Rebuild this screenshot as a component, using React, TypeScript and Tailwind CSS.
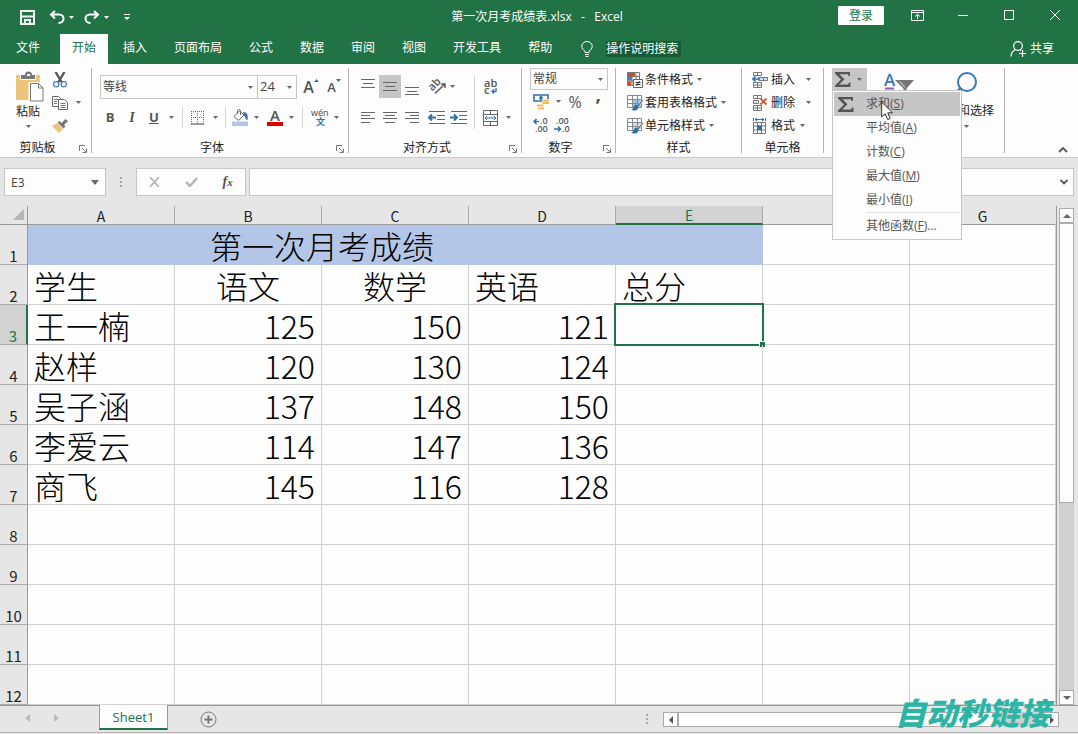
import { ReactNode } from 'react';
import clsx from 'clsx';

const UI_FONT = "font-['Open_Sans','Noto_Sans_CJK_SC',sans-serif]";
const CELL_FONT = "font-['Noto_Sans_CJK_SC',sans-serif]";

const tabs = ['开始', '插入', '页面布局', '公式', '数据', '审阅', '视图', '开发工具', '帮助'];
const columns = ['A', 'B', 'C', 'D', 'E', 'F', 'G'];
const students = [
  { name: '王一楠', scores: [125, 150, 121] },
  { name: '赵样', scores: [120, 130, 124] },
  { name: '吴子涵', scores: [137, 148, 150] },
  { name: '李爱云', scores: [114, 147, 136] },
  { name: '商飞', scores: [145, 116, 128] },
];
const emptyRows = [8, 9, 10, 11, 12];
const sumMenu = [
  { text: '求和', hotkey: 'S' },
  { text: '平均值', hotkey: 'A' },
  { text: '计数', hotkey: 'C' },
  { text: '最大值', hotkey: 'M' },
  { text: '最小值', hotkey: 'I' },
];

const Arrow = ({ className }: { className?: string }) => (
  <svg width="5" height="3" viewBox="0 0 5 3" className={clsx('shrink-0', className)} fill="currentColor">
    <path d="M0 0h5L2.500 3z" />
  </svg>
);

const Launcher = () => (
  <svg width="8" height="8" viewBox="0 0 8 8" fill="none" stroke="#777">
    <path d="M.5 6V.5H6M3 3l4 4M7.500 3.500v4h-4" />
  </svg>
);

interface IconButtonProps {
  label: string;
  className?: string;
  children: ReactNode;
}

const IconButton = ({ label, className, children }: IconButtonProps) => (
  <button
    aria-label={label}
    className={clsx('flex h-[23px] shrink-0 items-center justify-center text-[#555]', className ?? 'w-[22px]')}
  >
    {children}
  </button>
);

interface GroupProps {
  title?: string;
  className: string;
  launcher?: boolean;
  children: ReactNode;
}

const Group = ({ title, className, launcher, children }: GroupProps) => (
  <section className={clsx('relative flex shrink-0 flex-col border-r border-[#b5b5b5]', className)}>
    <div className="flex-1">{children}</div>
    <div className="relative flex h-[10px] items-center justify-center">
      {title && <span className={clsx('leading-4', launcher && 'pr-4')}>{title}</span>}
      {launcher && (
        <button aria-label={`${title}设置`} className="absolute right-1 bottom-0">
          <Launcher />
        </button>
      )}
    </div>
  </section>
);

const Lines = ({ rows }: { rows: number[][] }) => (
  <svg width="16" height="16" viewBox="0 0 16 16" stroke="#666">
    {rows.map(([x1, x2, y], i) => (
      <path key={i} d={`M${x1} ${y + 0.5}H${x2}`} />
    ))}
  </svg>
);

const IndentIcon = ({ right }: { right?: boolean }) => (
  <svg width="18" height="14" viewBox="0 0 18 14" fill="none" stroke="#666">
    <path d="M1 .5h16M9 4.500h8M9 8.500h8M1 12.500h16" />
    {right ? (
      <path d="M0 6.500h7M4 3.500l3 3-3 3" stroke="#2f6fae" strokeWidth="2" />
    ) : (
      <path d="M8 6.500H1M4 3.500l-3 3 3 3" stroke="#2f6fae" strokeWidth="2" />
    )}
  </svg>
);

const Sigma = () => (
  <svg width="16" height="15" viewBox="0 0 16 15" fill="#555">
    <path d="M0 0h15v4h-1.400L13 2.300H4.500l5 5L4.200 12.500h8.800l1-2H15.500V15H0v-1.500l6-6L0 1.500z" />
  </svg>
);

const ConditionalIcon = () => (
  <svg width="16" height="16" viewBox="0 0 16 16" fill="none">
    <path d="M.5.5h12v13H.5zM.5 4.500h12M.5 9h12M5 .5v13M9 .5v10" stroke="#777" />
    <path d="M1 1h7v3H1z" fill="#d0492f" />
    <path d="M1 5h4v3.500H1z" fill="#4a7ebb" />
    <path d="M1 9.500h3V13H1z" fill="#d0492f" />
    <path d="M6.500 7.500h9v8h-9z" fill="#fff" stroke="#666" />
    <path d="M8.500 10.500h5M8.500 12.500h5M12.500 9l-3 5" stroke="#333" />
  </svg>
);

const TableStyleIcon = ({ shaded }: { shaded?: boolean }) => (
  <svg width="17" height="16" viewBox="0 0 17 16" fill="none">
    {shaded ? <path d="M5 4.500h9V11H5z" fill="#cfdcec" /> : <path d="M5 4.500h10V12H5z" fill="#9cc3e6" />}
    <path d="M.5.5h14v12H.5zM.5 4.500h14M.5 8.500h14M5.500.5v12M10.500.5v12" stroke="#888" />
    <path d="M16 4l-6 6.500 1.500 1.500 5-6.500z" fill="#666" stroke="#fff" strokeWidth=".6" />
    <path d="M9.500 9.500c-3.500 0-2 4.500-5.500 5 2.500 2 7.500 1.500 7.500-3z" fill="#2f6fae" />
  </svg>
);

const CellsIcon = ({ kind }: { kind: string }) => (
  <svg width="16" height="16" viewBox="0 0 16 16" fill="none" stroke="#777">
    {kind === '格式' ? (
      <>
        <path d="M1.500 4.500h12v11h-12zM1.500 8h12M1.500 12h12M5.500 4.500v11M9.500 4.500v11" />
        <path d="M5 7.500h5V12H5z" fill="#2f6fae" stroke="none" />
        <path d="M1.500 0v3M13.500 0v3M3 1.500h9M5 0L3 1.500 5 3M10 0l2 1.500L10 3" stroke="#2f6fae" />
      </>
    ) : (
      <>
        <path d="M1.500.5h8v3h-8zM5.500.5v3M1.500 10.500h8v5h-8zM5.500 10.500v5M1.500 13h8" />
        {kind === '插入' ? (
          <>
            <path d="M6.500 5.500h9v3h-9zM11.500 5.500v3" fill="#d5e3f2" />
            <path d="M8 7H1M3.500 4.500L1 7l2.500 2.500" stroke="#2f6fae" strokeWidth="1.600" />
          </>
        ) : (
          <>
            <path d="M1.500 5.500h5v3h-5z" fill="#d5e3f2" />
            <path d="M8.500 3.500l6 6M14.500 3.500l-6 6" stroke="#d8532f" strokeWidth="1.800" />
          </>
        )}
      </>
    )}
  </svg>
);

const TitleBar = () => (
  <header className="relative flex h-[34px] items-center justify-between bg-[#217346] text-white">
    <div className="flex items-center pl-5">
      <button aria-label="保存" className="mr-[14px]">
        <svg width="15" height="15" viewBox="0 0 15 15" fill="none" stroke="#f0f5f2" strokeWidth="2">
          <path d="M1 1h13v13H1zM1 6.500h13M5 14v-4h5v4" />
        </svg>
      </button>
      <button aria-label="撤消" className="flex items-center gap-1">
        <svg width="16" height="14" viewBox="0 0 16 14" fill="none" stroke="#fff" strokeWidth="2">
          <path d="M6 1L2 4.500l4 4M2 4.500h8c3 0 4.500 2 4.500 4S13 13 9.500 13" />
        </svg>
        <Arrow />
      </button>
      <button aria-label="恢复" className="ml-[10px] flex items-center gap-1">
        <svg width="16" height="14" viewBox="0 0 16 14" fill="none" stroke="#fff" strokeWidth="2">
          <path d="M10 1l4 3.500-4 4M14 4.500H6C3 4.500 1.500 6.500 1.500 8.500S3 13 6.500 13" />
        </svg>
        <Arrow />
      </button>
      <button aria-label="自定义快速访问工具栏" className="ml-[15px]">
        <svg width="6" height="6" viewBox="0 0 6 6" fill="#fff">
          <path d="M0 0h6v1H0zM0 3h6L3 6z" />
        </svg>
      </button>
    </div>
    <h1 className="absolute left-1/2 -translate-x-1/2 pr-1 text-xs whitespace-pre">第一次月考成绩表.xlsx   -   Excel</h1>
    <div className="flex h-full items-center">
      <button className="mr-[10px] mb-[3px] h-[19px] w-[46px] rounded-[1px] bg-white leading-[18px] text-[#217346]">登录</button>
      <button aria-label="功能区显示选项" className="flex w-[46px] justify-center pb-1">
        <svg width="13" height="11" viewBox="0 0 13 11" fill="none" stroke="#fff">
          <path d="M.5.5h12v10H.5zM.5 2.500h12M6.500 9V4.500M4 6.500l2.500-2.300L9 6.500" />
        </svg>
      </button>
      <button aria-label="最小化" className="flex w-[46px] justify-center pb-1">
        <svg width="10" height="11" stroke="#fff">
          <path d="M0 5.500h10" />
        </svg>
      </button>
      <button aria-label="最大化" className="flex w-[46px] justify-center pb-1">
        <svg width="10" height="10" fill="none" stroke="#fff">
          <path d="M.5.5h9v9h-9z" />
        </svg>
      </button>
      <button aria-label="关闭" className="flex w-[46px] justify-center pb-1">
        <svg width="10" height="10" stroke="#fff">
          <path d="M0 0l10 10M10 0L0 10" />
        </svg>
      </button>
    </div>
  </header>
);

const TabBar = () => (
  <nav className="flex h-[30px] items-center gap-[3px] bg-[#217346] text-white">
    <button className="mr-px h-full w-14 pb-0.5">文件</button>
    {tabs.map((tab) => (
      <button key={tab} className={clsx('h-full shrink-0 px-3 pb-0.5', tab === '开始' && 'bg-[#fdfdfd] text-[#217346]')}>
        {tab}
      </button>
    ))}
    <button className="ml-[14px] flex shrink-0 items-center gap-[13px]">
      <svg width="12" height="16" viewBox="0 0 12 16" fill="none" stroke="#fff">
        <path d="M4 11.500v-1.300C2 8.800.8 7.300.8 5.300a5.200 4.800 0 0110.400 0c0 2-1.200 3.500-3.200 4.900v1.300zM4 13.500h4M4.500 15.500h3" />
      </svg>
      <span className="bg-[#185c37] pr-[3px] leading-4">操作说明搜索</span>
    </button>
    <button className="ml-auto flex shrink-0 items-center gap-1 pr-6 pb-px">
      <svg width="16" height="16" viewBox="0 0 16 16" fill="none" stroke="#fff" strokeWidth="1.200">
        <path d="M8 .7a4.300 4.300 0 010 8.700A4.300 4.300 0 018 .7M1 15.500c0-3 1.500-5.300 4-6.500M10 9.300h1M12.500 9v7M9 12.500h7" />
      </svg>
      共享
    </button>
  </nav>
);

const ClipboardGroup = () => (
  <Group title="剪贴板" className="w-[92px]" launcher>
    <div className="flex pl-3">
      <button className="flex w-8 flex-col items-center pt-[3px]">
        <svg width="28" height="31" viewBox="0 0 28 31" className="mb-0.5 ml-1" fill="none">
          <path d="M0 4h24v25H0z" fill="#ecc57a" />
          <path d="M4 9V3.500h16V9z" fill="#fff" />
          <path d="M5 8V4h4a3.500 3.500 0 017 0h3v4z" fill="#777" />
          <path d="M11 3h3v2h-3z" fill="#fff" />
          <path d="M14 12.500h8.500l4.500 4.500v13H14z" fill="#fff" stroke="#fff" strokeWidth="3" />
          <path d="M14.500 12.500h8l4.500 4.500v13H14.500zM22.500 12.500V17H27" fill="#fff" stroke="#777" />
        </svg>
        <span className="leading-4">粘贴</span>
        <Arrow className="mt-[5px]" />
      </button>
      <div className="flex flex-col pl-2">
        <IconButton label="剪切" className="w-4">
          <svg width="14" height="16" viewBox="0 0 14 16" fill="none">
            <path d="M2.500 0l6.500 10.500M11.500 0L5 10.500" stroke="#555" strokeWidth="2.300" />
            <circle cx="3.200" cy="12.300" r="2.600" fill="#fff" stroke="#4a7ebb" strokeWidth="1.300" />
            <circle cx="10.800" cy="12.300" r="2.600" fill="#fff" stroke="#4a7ebb" strokeWidth="1.300" />
          </svg>
        </IconButton>
        <IconButton label="复制" className="gap-2">
          <svg width="16" height="14" viewBox="0 0 16 14" stroke="#666" fill="#fff">
            <path d="M.5.5h6l2 2v8h-8z" />
            <path d="M2 3.500h4M2 5.500h3M2 7.500h3" stroke="#4a7ebb" />
            <path d="M6.500 3.500h6l3 3v7h-9z" />
            <path d="M8.500 7.500h5M8.500 9.500h5M8.500 11.500h5" stroke="#4a7ebb" />
          </svg>
          <Arrow />
        </IconButton>
        <IconButton label="格式刷" className="w-4">
          <svg width="16" height="14" viewBox="0 0 16 14">
            <path d="M0 7l5-3 6 6-4 4z" fill="#ecc57a" />
            <path d="M5.500 3.500l2-1.500 2 2L13.500 0 16 2l-4 4 1.500 1.500L11.500 9.500z" fill="#777" />
          </svg>
        </IconButton>
      </div>
    </div>
  </Group>
);

const Separator = ({ className }: { className?: string }) => <span className={clsx('w-px bg-[#d5d5d5]', className)} />;

const FontGroup = () => (
  <Group title="字体" className="w-[257px]" launcher>
    <div className="flex pt-[7px] pl-2">
      <label className="relative flex h-6 w-[158px] items-center border border-[#c6c6c6]">
        <select aria-label="字体" className="size-full appearance-none pl-0.5 text-[#444] outline-none">
          <option>等线</option>
        </select>
        <Arrow className="absolute right-1" />
      </label>
      <label className="relative -ml-px flex h-6 w-10 items-center border border-[#c6c6c6]">
        <select aria-label="字号" className="size-full appearance-none pl-0.5 text-[13px] text-[#444] outline-none">
          <option>24</option>
        </select>
        <Arrow className="absolute right-1" />
      </label>
      <IconButton label="增大字号" className="ml-[6px] w-4">
        <span className="text-base font-semibold">A</span>
        <svg width="5" height="3" className="mb-3 shrink-0" fill="#2f6fae"><path d="M0 3h5L2.500 0z" /></svg>
      </IconButton>
      <IconButton label="减小字号" className="ml-[7px] w-4">
        <span className="pt-0.5 text-[13px] font-semibold">A</span>
        <svg width="5" height="3" className="mb-3 shrink-0" fill="#2f6fae"><path d="M0 0h5L2.500 3z" /></svg>
      </IconButton>
    </div>
    <div className="flex items-center pt-[7px] pl-[7px]">
      <IconButton label="加粗"><b className="text-[13px]">B</b></IconButton>
      <IconButton label="倾斜"><i className="font-['Liberation_Serif',serif] text-sm font-bold">I</i></IconButton>
      <IconButton label="下划线"><span className="text-[13px] font-bold underline">U</span></IconButton>
      <IconButton label="下划线选项" className="w-3"><Arrow /></IconButton>
      <Separator className="mx-[5px] h-[21px]" />
      <IconButton label="边框" className="ml-[3px] gap-2">
        <svg width="14" height="14" viewBox="0 0 14 14" fill="none" stroke="#666">
          <path d="M.5 0v13M6.500 0v13M12.500 0v13M0 .5h13M0 6.500h13" strokeDasharray="1 1" />
          <path d="M0 13h13" stroke="#444" />
        </svg>
        <Arrow />
      </IconButton>
      <Separator className="mr-1.5 ml-[7px] h-[21px]" />
      <IconButton label="填充颜色" className="gap-[5px]">
        <svg width="17" height="17" viewBox="0 0 17 17" fill="none">
          <path d="M0 12.500h16V17H0z" fill="#b4c6e7" />
          <path d="M7.500 2L2 7.500l4.500 4L12 6zM5.500 5V2c0-2 3-2 3 0v4" stroke="#666" />
          <path d="M11 3c4 0 5.500 3 4.500 8-2 0-2-3-3.500-4.500z" fill="#2f6fae" />
        </svg>
        <Arrow />
      </IconButton>
      <IconButton label="字体颜色" className="ml-2 gap-1.5">
        <span className="flex w-4 flex-col items-center">
          <span className="text-[15px] leading-[13px] font-semibold">A</span>
          <span className="h-1 w-full bg-[#e00000]" />
        </span>
        <Arrow />
      </IconButton>
      <Separator className="mr-[9px] ml-2 h-[21px]" />
      <IconButton label="拼音" className="gap-1.5">
        <svg width="16" height="18" viewBox="0 0 16 18" className="overflow-visible">
          <text x="-1" y="7" fontSize="9" fill="#444">wén</text>
          <text x="4" y="16" fontSize="9" fontWeight="700" fill="#2f6fae">文</text>
        </svg>
        <Arrow />
      </IconButton>
    </div>
  </Group>
);

const AlignGroup = () => (
  <Group title="对齐方式" className="w-[173px]" launcher>
    <div className="flex pt-[7px] pl-2">
      <div className="flex flex-col gap-2">
        <div className="flex">
          <IconButton label="顶端对齐"><Lines rows={[[1, 15, 0], [3, 13, 4], [1, 15, 8]]} /></IconButton>
          <IconButton label="垂直居中" className="w-[22px] bg-[#c6c6c6]"><Lines rows={[[1, 15, 3], [3, 13, 7], [1, 15, 11]]} /></IconButton>
          <IconButton label="底端对齐"><Lines rows={[[1, 15, 8], [3, 13, 12], [1, 15, 15]]} /></IconButton>
          <IconButton label="方向" className="ml-1.5 gap-1">
            <svg width="17" height="17" viewBox="0 0 17 17" className="overflow-visible" fill="none" stroke="#555">
              <text x="1" y="12" fontSize="11" fontWeight="600" fill="#555" stroke="none" transform="rotate(-45 4 10)">ab</text>
              <path d="M6 15.500L15.500 6.500M12 6h4v4" strokeWidth="1.400" />
            </svg>
            <Arrow />
          </IconButton>
        </div>
        <div className="flex">
          <IconButton label="左对齐"><Lines rows={[[1, 15, 2], [1, 10, 5], [1, 15, 8], [1, 10, 12]]} /></IconButton>
          <IconButton label="居中"><Lines rows={[[1, 15, 2], [3, 13, 5], [1, 15, 8], [3, 13, 12]]} /></IconButton>
          <IconButton label="右对齐"><Lines rows={[[1, 15, 2], [6, 15, 5], [1, 15, 8], [6, 15, 12]]} /></IconButton>
          <IconButton label="减少缩进量" className="ml-[3px] w-[22px]"><IndentIcon /></IconButton>
          <IconButton label="增加缩进量"><IndentIcon right /></IconButton>
        </div>
      </div>
      <Separator className="mr-2 ml-1" />
      <div className="flex flex-col gap-2">
        <IconButton label="自动换行" className="w-4">
          <svg width="14" height="18" viewBox="0 0 14 18" className="overflow-visible" fill="none">
            <text x="0" y="9" fontSize="11" fontWeight="600" fill="#555">ab</text>
            <text x="0" y="16" fontSize="11" fontWeight="600" fill="#555">c</text>
            <path d="M12 10v3.500H8M10 11.500l-2 2 2 2" stroke="#2f6fae" strokeWidth="1.300" />
          </svg>
        </IconButton>
        <IconButton label="合并后居中" className="gap-2">
          <svg width="15" height="16" viewBox="0 0 15 16" fill="none" stroke="#666">
            <path d="M.5.5h14v15H.5zM.5 4.500h14M.5 11.500h14M7.500.5v4M7.500 11.500v4" />
            <path d="M2 8h11M4 6L2 8l2 2M11 6l2 2-2 2" stroke="#2f6fae" />
          </svg>
          <Arrow />
        </IconButton>
      </div>
    </div>
  </Group>
);

const NumberGroup = () => (
  <Group title="数字" className="w-[94px]" launcher>
    <div className="flex flex-col pl-2">
      <label className="relative flex h-[22px] w-[78px] items-center border border-[#c6c6c6]">
        <select aria-label="数字格式" className="size-full appearance-none pl-0.5 text-[#444] outline-none">
          <option>常规</option>
        </select>
        <Arrow className="absolute right-1" />
      </label>
      <div className="flex items-center pl-[3px]">
        <IconButton label="会计数字格式" className="gap-1.5">
          <svg width="17" height="16" viewBox="0 0 17 16" fill="none">
            <path d="M1 1h14v6H1z" stroke="#2f6fae" strokeWidth="1.600" />
            <circle cx="8" cy="4" r="1.900" fill="#2f6fae" />
            <path d="M9 5h8v6H9zM4 9h7v7H4z" fill="#fff" />
            <path d="M9.500 6.500H16M9.500 9H16M4 11.500h6.500M5 14.500h6" stroke="#ecb75c" strokeWidth="1.800" />
          </svg>
          <Arrow />
        </IconButton>
        <IconButton label="百分比样式" className="ml-1.5 w-4"><span className="text-base font-medium">%</span></IconButton>
        <IconButton label="千位分隔样式" className="ml-[7px] w-4"><span className="pt-2 text-xl leading-5 font-bold">’</span></IconButton>
      </div>
      <div className="flex gap-[5px] pl-[3px]">
        <IconButton label="增加小数位数" className="w-4">
          <svg width="16" height="16" viewBox="0 0 16 16" className="overflow-visible" fill="none">
            <text x="7" y="7" fontSize="9" fontWeight="600" fill="#555">.0</text>
            <text x="2" y="15" fontSize="9" fontWeight="600" fill="#555">.00</text>
            <path d="M6 4.500H1M3.500 2L1 4.500 3.500 7" stroke="#2f6fae" strokeWidth="1.500" />
          </svg>
        </IconButton>
        <IconButton label="减少小数位数" className="w-4">
          <svg width="16" height="16" viewBox="0 0 16 16" className="overflow-visible" fill="none">
            <text x="2" y="7" fontSize="9" fontWeight="600" fill="#555">.00</text>
            <text x="8" y="15" fontSize="9" fontWeight="600" fill="#555">.0</text>
            <path d="M0 12h6M4 9.500L6.500 12 4 14.500" stroke="#2f6fae" strokeWidth="1.500" />
          </svg>
        </IconButton>
      </div>
    </div>
  </Group>
);

const StyleGroup = () => (
  <Group title="样式" className="w-[126px]">
    <div className="flex flex-col items-start pl-[11px]">
      {['条件格式', '套用表格格式', '单元格样式'].map((text, i) => (
        <button key={text} className="flex h-[23px] items-center">
          <span className="w-[18px]">{i === 0 ? <ConditionalIcon /> : <TableStyleIcon shaded={i === 2} />}</span>
          {text}
          <Arrow className="ml-1" />
        </button>
      ))}
    </div>
  </Group>
);

const CellsGroup = () => (
  <Group title="单元格" className="w-[82px]">
    <div className="flex flex-col items-start pl-[10px]">
      {['插入', '删除', '格式'].map((text) => (
        <button key={text} className="flex h-[23px] items-center">
          <CellsIcon kind={text} />
          <span className="ml-[3px]">{text}</span>
          <Arrow className={text === '格式' ? 'ml-[5px]' : 'ml-[11px]'} />
        </button>
      ))}
    </div>
  </Group>
);

const SumMenu = () => (
  <div role="menu" className="absolute top-[22px] left-2 z-20 w-[130px] border border-[#c6c6c6] bg-[#fdfdfd] p-px text-[#555]">
    {sumMenu.map((item, i) => (
      <button
        key={item.text}
        role="menuitem"
        className={clsx('relative flex h-6 w-full items-center pl-8', i === 0 && 'bg-[#c6c6c6]')}
      >
        {i === 0 && (
          <span className="absolute left-1">
            <Sigma />
          </span>
        )}
        <span>
          {item.text}(<u>{item.hotkey}</u>)
        </span>
        {i === 0 && (
          <svg width="13" height="20" viewBox="0 0 13 20" className="absolute top-[9px] left-[47px]" fill="#fff" stroke="#333">
            <path d="M.7 1v15l3.500-3.300L6.700 18.500l2.500-1-2.500-5.700h4.800z" />
          </svg>
        )}
      </button>
    ))}
    <div className="ml-8 border-t border-[#e1e1e1]" />
    <button role="menuitem" className="flex h-[25px] w-full items-center pl-8">
      <span>
        其他函数(<u>F</u>)...
      </span>
    </button>
  </div>
);

const EditGroup = () => (
  <Group className="w-[181px]">
    <div className="flex items-start pl-2">
      <button aria-label="自动求和" className="flex h-[22px] w-[35px] items-center gap-[6px] bg-[#c6c6c6] pl-[3px]">
        <Sigma />
        <Arrow />
      </button>
      <button aria-label="排序和筛选" className="ml-4 pt-1">
        <svg width="31" height="20" viewBox="0 0 31 20" className="overflow-visible">
          <text x="1" y="14" fontSize="17" fontWeight="600" fill="#3b77b5">A</text>
          <path d="M2 16.500h9" stroke="#8d5fb0" strokeWidth="2" />
          <path d="M12 8h19l-7.500 8.500v3h-3v-3z" fill="#777" />
          <path d="M17 9.500l5 6" stroke="#ddd" />
        </svg>
      </button>
      <button className="ml-5 flex w-[60px] flex-col items-center pt-1">
        <svg width="22" height="22" viewBox="0 0 22 22" className="mb-[9px] ml-1" fill="none" stroke="#3b77b5">
          <circle cx="12" cy="10" r="9" strokeWidth="2" />
          <path d="M6 16l-5 5" strokeWidth="3" />
        </svg>
        <span className="leading-4">查找和选择</span>
        <Arrow className="mt-[6px] ml-1" />
      </button>
    </div>
    <SumMenu />
  </Group>
);

const Ribbon = () => (
  <div className="flex h-[93px] bg-[#fdfdfd] py-1 text-[#222] [&_svg]:text-[#666]">
    <ClipboardGroup />
    <FontGroup />
    <AlignGroup />
    <NumberGroup />
    <StyleGroup />
    <CellsGroup />
    <EditGroup />
    <button aria-label="折叠功能区" className="mt-auto mr-[10px] ml-auto">
      <svg width="10" height="7" fill="none" stroke="#555" strokeWidth="1.800">
        <path d="M1 6l4-4 4 4" />
      </svg>
    </button>
  </div>
);

const FormulaBar = () => (
  <div className="flex h-[49px] items-start border-t border-[#c9c9c9] bg-[#e6e6e6] pt-[10px] pr-1 pl-1">
    <label className="relative flex h-7 w-[102px] items-center border border-[#c6c6c6] bg-[#fdfdfd]">
      <input aria-label="名称框" defaultValue="E3" className="size-full pl-1.5 text-xs text-[#444] outline-none" />
      <svg width="8" height="5" className="absolute right-1.5" fill="#666"><path d="M0 0h8L4 5z" /></svg>
    </label>
    <svg width="30" height="28" fill="#aaa">
      <path d="M14 9h2v2h-2zM14 13h2v2h-2zM14 17h2v2h-2z" />
    </svg>
    <div className="mr-[3px] flex h-7 w-[110px] items-center justify-around border border-[#c6c6c6] bg-[#fdfdfd]">
      <button aria-label="取消">
        <svg width="11" height="10" stroke="#b5b5b5" strokeWidth="1.800"><path d="M1 0l9 10M10 0L1 10" /></svg>
      </button>
      <button aria-label="输入">
        <svg width="13" height="10" fill="none" stroke="#b5b5b5" strokeWidth="2.400"><path d="M1 5l4 4 7-8" /></svg>
      </button>
      <button aria-label="插入函数" className="font-['Liberation_Serif',serif] text-sm font-bold text-[#555] italic">
        f<span className="text-[11px]">x</span>
      </button>
    </div>
    <label className="relative flex h-7 flex-1 items-center border border-[#c6c6c6] bg-[#fdfdfd]">
      <input aria-label="编辑栏" className="size-full px-2 outline-none" />
      <svg width="8" height="6" className="absolute right-[5px]" fill="none" stroke="#555" strokeWidth="1.800"><path d="M.5 1L4 4.500 7.500 1" /></svg>
    </label>
  </div>
);

const RowHead = ({ row }: { row: number }) => (
  <th
    scope="row"
    className={clsx(
      'h-10 border-b border-b-[#ababab] p-0 align-bottom text-[15px] leading-4 font-normal',
      row === 3 ? 'border-r-2 border-r-[#217346] bg-[#d2d2d2] text-[#217346]' : 'border-r border-r-[#999] bg-[#e6e6e6] text-[#222]',
    )}
  >
    {row}
  </th>
);

const CELL = 'border-r border-b border-[#d0d0d0] px-1.5 py-0 align-bottom leading-[38px] font-light';

const Sheet = () => (
  <table className={clsx('w-full table-fixed border-separate border-spacing-0 text-[32px] text-black', CELL_FONT)}>
    <colgroup>
      <col className="w-7" />
      {columns.map((c) => (
        <col key={c} className={c === 'G' ? '' : 'w-[147px]'} />
      ))}
    </colgroup>
    <thead>
      <tr className="text-sm leading-4">
        <th aria-label="全选" className="h-[19px] border-r border-b border-[#999] bg-[#e6e6e6] p-0">
          <svg width="12" height="12" className="mr-0.5 ml-auto" fill="#b5b5b5"><path d="M11 0v11H0z" /></svg>
        </th>
        {columns.map((c) => (
          <th
            key={c}
            scope="col"
            className={clsx(
              'border-r border-r-[#ababab] p-0 align-bottom font-normal',
              c === 'E' ? 'border-b-2 border-b-[#217346] bg-[#d2d2d2] text-[#217346]' : 'border-b border-b-[#999] bg-[#e6e6e6] text-[#222]',
              c === 'G' && 'border-r-transparent',
            )}
          >
            {c}
          </th>
        ))}
      </tr>
    </thead>
    <tbody>
      <tr>
        <RowHead row={1} />
        <td colSpan={4} className="bg-[#b4c6e7] p-0 text-center align-bottom leading-10 font-light">第一次月考成绩</td>
        <td className="border-r border-[#b4c6e7] bg-[#b4c6e7]" />
        <td className={CELL} />
        <td className={CELL} />
      </tr>
      <tr>
        <RowHead row={2} />
        <td className={CELL}>学生</td>
        <td className={clsx(CELL, 'text-center')}>语文</td>
        <td className={clsx(CELL, 'text-center')}>数学</td>
        <td className={CELL}>英语</td>
        <td className={CELL}>总分</td>
        <td className={CELL} />
        <td className={CELL} />
      </tr>
      {students.map((student, i) => (
        <tr key={student.name}>
          <RowHead row={i + 3} />
          <td className={CELL}>{student.name}</td>
          {student.scores.map((score, j) => (
            <td key={j} className={clsx(CELL, 'text-right')}>
              {score}
            </td>
          ))}
          <td className={clsx(CELL, 'relative')}>
            {i === 0 && (
              <span className="absolute -inset-0.5 border-2 border-[#217346]">
                <span className="absolute -right-[3px] -bottom-[3px] size-1.5 border-t border-l border-white bg-[#217346]" />
              </span>
            )}
          </td>
          <td className={CELL} />
          <td className={CELL} />
        </tr>
      ))}
      {emptyRows.map((row) => (
        <tr key={row}>
          <RowHead row={row} />
          {columns.map((c) => (
            <td key={c} className={CELL} />
          ))}
        </tr>
      ))}
    </tbody>
  </table>
);

const VerticalScroll = () => (
  <div className="flex w-[21px] flex-col bg-[#e6e6e6] pt-0.5 pr-1 pl-0.5">
    <button aria-label="向上滚动" className="flex h-[15px] items-center justify-center border border-[#ababab] bg-[#fdfdfd]">
      <svg width="8" height="4" fill="#666"><path d="M0 4h8L4 0z" /></svg>
    </button>
    <div className="flex-1 bg-[#d0d0d0]">
      <div className="h-3/5 border border-[#ababab] bg-[#fdfdfd]" />
    </div>
    <button aria-label="向下滚动" className="flex h-[15px] items-center justify-center border border-[#ababab] bg-[#fdfdfd]">
      <svg width="8" height="4" fill="#666"><path d="M0 0h8L4 4z" /></svg>
    </button>
  </div>
);

const SheetTabs = () => (
  <footer className="relative flex h-7 items-start border-b border-[#b5b5b5] bg-[#e6e6e6]">
    <div className="flex h-6 w-[99px] items-center gap-6 border-t border-[#999] pl-[25px]">
      <button aria-label="上一个工作表"><svg width="5" height="8" fill="#bbb"><path d="M5 0v8L0 4z" /></svg></button>
      <button aria-label="下一个工作表"><svg width="5" height="8" fill="#bbb"><path d="M0 0v8l5-4z" /></svg></button>
    </div>
    <button className="h-[25px] w-[69px] border-x border-b-2 border-x-[#999] border-b-[#217346] bg-[#fdfdfd] text-[13px] leading-6 text-[#217346]">
      Sheet1
    </button>
    <div className="flex flex-1 items-center border-t border-[#999] pt-[5px] pr-[19px]">
      <button aria-label="新工作表" className="ml-8">
        <svg width="17" height="17" viewBox="0 0 17 17" fill="none" stroke="#777">
          <circle cx="8.500" cy="8.500" r="7.500" />
          <path d="M8.500 4.500v8M4.500 8.500h8" strokeWidth="2" />
        </svg>
      </button>
      <svg width="2" height="11" className="mr-[15px] ml-auto" fill="#aaa"><path d="M0 0h2v2H0zM0 4h2v2H0zM0 8h2v2H0z" /></svg>
      <div className="flex h-[15px] w-4/9 bg-[#d0d0d0]">
        <button aria-label="向左滚动" className="flex w-[15px] items-center justify-center border border-[#ababab] bg-[#fdfdfd]">
          <svg width="4" height="8" fill="#555"><path d="M4 0v8L0 4z" /></svg>
        </button>
        <div className="w-4/5 border border-[#ababab] bg-[#fdfdfd]" />
        <button aria-label="向右滚动" className="ml-auto flex w-[15px] items-center justify-center border border-[#ababab] bg-[#fdfdfd]">
          <svg width="4" height="8" fill="#555"><path d="M0 0v8l4-4z" /></svg>
        </button>
      </div>
    </div>
    <span className={clsx('absolute right-7 bottom-1 text-[31px] leading-8 font-black whitespace-nowrap text-[#2bb5a5] italic', CELL_FONT)}>
      自动秒链接
    </span>
  </footer>
);

const App = () => {
  return (
    <div className={clsx('flex min-h-screen flex-col overflow-hidden bg-[#e6e6e6] text-xs', UI_FONT)}>
      <TitleBar />
      <TabBar />
      <Ribbon />
      <FormulaBar />
      <main className="flex">
        <div className="flex-1 border-r border-[#999] bg-[#fdfdfd]">
          <Sheet />
        </div>
        <VerticalScroll />
      </main>
      <SheetTabs />
    </div>
  );
};

export default App;
